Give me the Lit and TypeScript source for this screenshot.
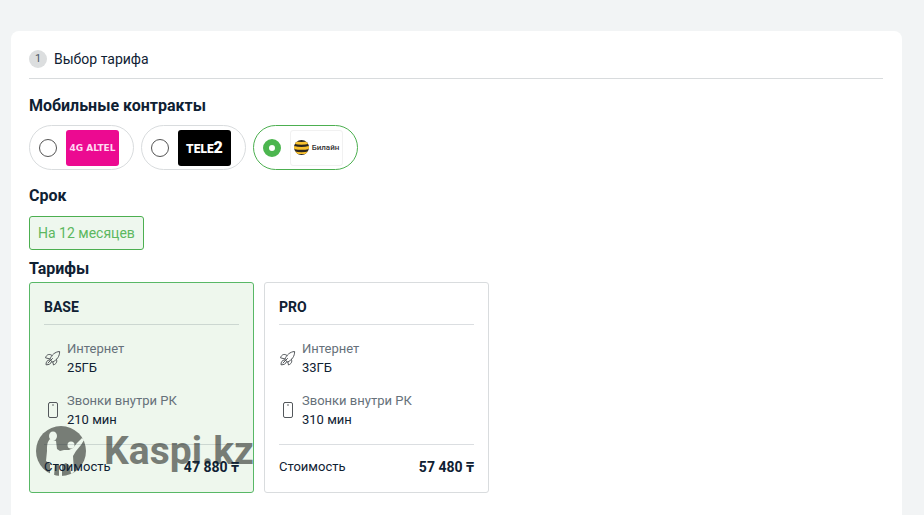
import { LitElement, html, css, svg } from "lit";
import { customElement, state } from "lit/decorators.js";
import { classMap } from "lit/directives/class-map.js";

interface Tariff {
  id: string;
  name: string;
  internet: string;
  calls: string;
  price: string;
}

const TARIFFS: Tariff[] = [
  { id: "base", name: "BASE", internet: "25ГБ", calls: "210 мин", price: "47 880 ₸" },
  { id: "pro", name: "PRO", internet: "33ГБ", calls: "310 мин", price: "57 480 ₸" },
];

const rocket = html`<svg class="icon" viewBox="0 0 18 18" aria-hidden="true">
  <path d="M6 10C7.500 6 11 2.800 15.600 2.500 15.800 7 13 11 8.800 13Z" />
  <path d="M8 6.500C5.500 4.300 2.500 5.500 1.500 8.800L6 10M12.500 10.500C13.500 13 12 15 9.500 16L8.800 13" />
  <path d="M5.500 11C3 11 2 13 2 15.800 4.800 15.800 7 15 7.500 12.800M4 14L8.500 9.500" />
</svg>`;

const phone = html`<svg class="icon" viewBox="0 0 18 18" aria-hidden="true">
  <rect x="4.500" y="1.500" width="9" height="15" rx="1.500" />
  <path d="M8.500 4H9.500" />
</svg>`;

const people = svg`
  <circle cx="25" cy="25" r="25" class="disc" />
  <g class="figure">
    <ellipse cx="17" cy="10" rx="4" ry="4.500" />
    <path d="M14 13C11 16 11 20 11 25L10 35 14 38 14 49 18 50 19 39 23 38 23 50 26 50 26 39 30 37 34 40 35 48 38 46 37 30 40 25 45 19 48 14 46 12 41 17 37 22 33 24 28 24 24 25 21 23 20 15Z" />
    <circle cx="35" cy="19" r="3.500" />
  </g>
`;

@customElement("app-root")
export class AppRoot extends LitElement {
  @state() private operator = "beeline";
  @state() private tariff = "base";

  static styles = css`
    :host {
      display: flex;
      box-sizing: border-box;
      min-height: 100vh;
      padding: 31px 22px 0 11px;
      background: #f2f4f5;
      color: #0f2133;
      font: 14px/18px Roboto, "Noto Sans", sans-serif;
    }
    * {
      box-sizing: border-box;
    }
    .panel {
      flex: 1;
      background: #fff;
      border-radius: 8px 8px 0 0;
      padding: 18px 19px 22px 18px;
    }
    .step {
      display: flex;
      align-items: center;
      gap: 7px;
      padding: 1px 0 10px;
      border-bottom: 1px solid #d8dbdd;
      margin-bottom: 16px;
    }
    .step h1 {
      margin: 0;
      font-size: 14px;
      font-weight: 400;
    }
    .num {
      width: 18px;
      height: 18px;
      border-radius: 50%;
      background: #dcdedf;
      color: #4b5865;
      font-size: 11px;
      text-align: center;
    }
    h2 {
      margin: 0;
      font-size: 16px;
      line-height: 22px;
      font-weight: 700;
    }
    fieldset {
      border: 0;
      margin: 0;
      padding: 0;
      min-width: 0;
    }
    .operators {
      display: flex;
      flex-wrap: wrap;
      gap: 7px;
      margin: 8px 0 15px;
    }
    .pill {
      display: flex;
      align-items: center;
      gap: 9px;
      height: 45px;
      padding: 0 14px 0 9px;
      border: 1px solid #d9dcde;
      border-radius: 23px;
      cursor: pointer;
    }
    .pill.on {
      border-color: #4caf50;
    }
    .pill input {
      appearance: none;
      width: 18px;
      height: 18px;
      margin: 0;
      border: 1px solid #555;
      border-radius: 50%;
      background: #fff;
    }
    .pill input:checked {
      border: 6px solid #4cb64f;
    }
    .brand {
      display: flex;
      align-items: center;
      justify-content: center;
      width: 53px;
      height: 36px;
      border-radius: 3px;
      overflow: hidden;
      color: #fff;
      font-weight: 700;
      white-space: nowrap;
    }
    .altel {
      background: #ec0a91;
      color: #ffd9f0;
      font: 700 9px/12px "DejaVu Sans", sans-serif;
    }
    .tele2 {
      background: #000;
      font-size: 12px;
      font-weight: 900;
      align-items: baseline;
      padding-top: 9px;
    }
    .tele2 b {
      font-size: 16px;
    }
    .beeline {
      border: 1px solid #f1f1f1;
      color: #333;
      font-size: 8px;
      font-weight: 500;
      gap: 3px;
    }
    .beeline svg {
      width: 15px;
      height: 15px;
    }
    .term {
      display: block;
      height: 34px;
      margin: 9px 0 8px;
      padding: 0 8px;
      border: 1px solid #4caf50;
      border-radius: 3px;
      background: #eef7ee;
      color: #5cb85f;
      font: inherit;
    }
    .tariffs {
      display: flex;
      flex-wrap: wrap;
      gap: 10px;
      margin-top: 2px;
    }
    .card {
      position: relative;
      isolation: isolate;
      width: 225px;
      padding: 15px 14px 16px;
      border: 1px solid #d9dcde;
      border-radius: 3px;
      cursor: pointer;
    }
    .card.on {
      border-color: #58b866;
      background: #eef7ed;
    }
    .card input {
      position: absolute;
      opacity: 0;
      margin: 0;
    }
    .name {
      display: block;
      padding-bottom: 8px;
      border-bottom: 1px solid #0f213326;
      font-weight: 700;
    }
    .feature {
      display: flex;
      align-items: center;
      gap: 5px;
      margin-top: 14px;
      font-size: 13px;
      line-height: 19px;
    }
    .feature dl {
      margin: 0;
    }
    .feature dt {
      color: #66717a;
    }
    .feature dd {
      margin: 0;
    }
    .icon {
      width: 18px;
      height: 18px;
      fill: none;
      stroke: #54585c;
      stroke-width: 1;
      stroke-linejoin: round;
      stroke-linecap: round;
    }
    .cost {
      display: flex;
      justify-content: space-between;
      align-items: center;
      margin-top: 15px;
      padding-top: 13px;
      border-top: 1px solid #0f213326;
      font-size: 13px;
    }
    .cost strong {
      font-size: 14px;
    }
    .mark {
      position: absolute;
      z-index: -1;
      left: 6px;
      bottom: 16px;
      display: flex;
      align-items: center;
      gap: 18px;
      color: #777d76;
      font-size: 39px;
      line-height: 50px;
      font-weight: 700;
    }
    .mark svg {
      width: 50px;
      height: 50px;
    }
    .disc {
      fill: #777d76;
    }
    .figure {
      fill: #eef7ed;
    }
  `;

  private brand(id: string) {
    if (id === "altel") return html`<span class="brand altel">4G ALTEL</span>`;
    if (id === "tele2") return html`<span class="brand tele2">TELE<b>2</b></span>`;
    return html`<span class="brand beeline">
      <svg viewBox="0 0 16 16" aria-hidden="true">
        <clipPath id="ball"><circle cx="8" cy="8" r="8" /></clipPath>
        <g clip-path="url(#ball)">
          <path fill="#2b2620" d="M0 0H16V16H0Z" />
          <path fill="#f9c12d" d="M0 1Q8 3 16 1V4Q8 6 0 4ZM0 6.500Q8 8.500 16 6.500V9.500Q8 11.500 0 9.500ZM0 12Q8 14 16 12V14Q8 16 0 14Z" />
        </g>
      </svg>Билайн</span>`;
  }

  private feature(icon: unknown, label: string, value: string) {
    return html`<div class="feature">
      ${icon}
      <dl><dt>${label}</dt><dd>${value}</dd></dl>
    </div>`;
  }

  render() {
    return html`<main class="panel">
      <header class="step"><span class="num">1</span><h1>Выбор тарифа</h1></header>

      <h2 id="operators">Мобильные контракты</h2>
      <fieldset class="operators" aria-labelledby="operators">
        ${["altel", "tele2", "beeline"].map(
          (id) => html`<label class=${classMap({ pill: true, on: this.operator === id })}>
            <input type="radio" name="operator" .checked=${this.operator === id}
              @change=${() => (this.operator = id)} />
            ${this.brand(id)}
          </label>`
        )}
      </fieldset>

      <h2>Срок</h2>
      <button class="term" type="button" aria-pressed="true">На 12 месяцев</button>

      <h2 id="tariffs">Тарифы</h2>
      <fieldset class="tariffs" aria-labelledby="tariffs">
        ${TARIFFS.map(
          (t) => html`<label class=${classMap({ card: true, on: this.tariff === t.id })}>
            <input type="radio" name="tariff" .checked=${this.tariff === t.id}
              @change=${() => (this.tariff = t.id)} />
            ${t.id === "base"
              ? html`<span class="mark"><svg viewBox="0 0 50 50" aria-hidden="true">${people}</svg>Kaspi.kz</span>`
              : null}
            <span class="name">${t.name}</span>
            ${this.feature(rocket, "Интернет", t.internet)}
            ${this.feature(phone, "Звонки внутри РК", t.calls)}
            <div class="cost"><span>Стоимость</span><strong>${t.price}</strong></div>
          </label>`
        )}
      </fieldset>
    </main>`;
  }
}
